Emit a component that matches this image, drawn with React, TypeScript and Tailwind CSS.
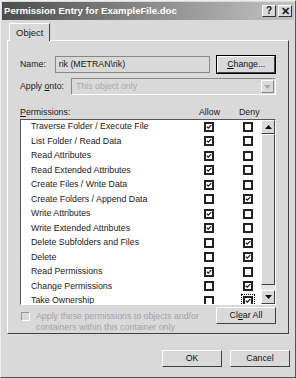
import React from 'react';

const perms: [string, boolean, boolean][] = [
  ['Traverse Folder / Execute File', true, false],
  ['List Folder / Read Data', true, false],
  ['Read Attributes', true, false],
  ['Read Extended Attributes', true, false],
  ['Create Files / Write Data', true, false],
  ['Create Folders / Append Data', false, true],
  ['Write Attributes', true, false],
  ['Write Extended Attributes', true, false],
  ['Delete Subfolders and Files', false, true],
  ['Delete', false, true],
  ['Read Permissions', true, false],
  ['Change Permissions', false, true],
  ['Take Ownership', false, true],
];

function Check({ on, focus }: { on: boolean; focus?: boolean }) {
  return (
    <div className={`flex items-center justify-center w-[12px] h-[12px] ${focus ? 'outline outline-1 outline-dotted outline-black' : ''}`}>
      <div className="w-[10px] h-[10px] border-2 border-[#222] bg-white flex items-center justify-center">
        {on && (
          <svg width="8" height="8" viewBox="0 0 8 8">
            <path d="M1 3.5 L3 5.5 L7 1.5" stroke="#111" strokeWidth="1.6" fill="none" />
          </svg>
        )}
      </div>
    </div>
  );
}

function Btn({ children, def, className = '' }: { children: React.ReactNode; def?: boolean; className?: string }) {
  return (
    <div className={`${def ? 'border border-black' : ''} ${className}`}>
      <div className="h-full border border-t-white border-l-white border-b-[#404040] border-r-[#404040] bg-[#d9d9d9] flex items-center justify-center text-[#111]">
        {children}
      </div>
    </div>
  );
}

export default function App() {
  return (
    <div
      className="w-[296px] h-[378px] bg-[#d9d9d9] text-[8.8px] leading-none text-[#1a1a1a] overflow-hidden flex flex-col border border-t-[#eee] border-l-[#eee] border-r-[#555] border-b-[#555] whitespace-nowrap"
      style={{ fontFamily: '"Liberation Sans", Arial, sans-serif' }}
    >
      {/* title bar */}
      <div className="h-[18px] mx-[1px] mt-[1px] flex items-center justify-between pl-[2px] pr-[2px] bg-gradient-to-r from-[#4d4d4d] via-[#8a8a8a] to-[#c4c4c4]">
        <span className="text-white font-bold text-[9.6px]">Permission Entry for ExampleFile.doc</span>
        <div className="flex gap-[2px]">
          <div className="w-[14px] h-[12px] bg-[#d9d9d9] border border-t-white border-l-white border-b-[#333] border-r-[#333] flex items-center justify-center text-[10px] font-bold">?</div>
          <div className="w-[14px] h-[12px] bg-[#d9d9d9] border border-t-white border-l-white border-b-[#333] border-r-[#333] flex items-center justify-center text-[11px] font-bold">✕</div>
        </div>
      </div>

      {/* tabs */}
      <div className="px-[6px] pt-[3px] flex flex-col">
        <div className="flex">
          <div className="ml-[2px] h-[18px] px-[6px] flex items-center border border-b-0 border-t-white border-l-white border-r-[#404040] bg-[#d9d9d9] relative z-10 -mb-[1px] text-[9.5px]">
            Object
          </div>
        </div>
        <div className="h-[294px] border border-t-white border-l-white border-b-[#404040] border-r-[#404040] flex flex-col px-[12px] pt-[14px]">
          {/* Name row */}
          <div className="flex items-center h-[18px]">
            <span className="w-[35px]">Name:</span>
            <div className="w-[157px] h-[17px] border border-[#888] bg-[#d9d9d9] flex items-center px-[3px]">rik (METRAN\rik)</div>
            <Btn def className="ml-[6px] w-[60px] h-[19px]"><span><span className="underline">C</span>hange...</span></Btn>
          </div>
          {/* Apply onto */}
          <div className="flex items-center h-[18px] mt-[5px]">
            <span className="w-[51px]">Apply <span className="underline">o</span>nto:</span>
            <div className="flex-1 h-[17px] border border-t-[#888] border-l-[#888] border-b-white border-r-white bg-[#d9d9d9] flex items-center justify-between pl-[4px] pr-[1px] text-[#a8a8a8]">
              <span>This object only</span>
              <div className="w-[13px] h-[13px] border border-t-white border-l-white border-b-[#888] border-r-[#888] flex items-center justify-center">
                <svg width="7" height="4" viewBox="0 0 7 4"><path d="M0 0 L7 0 L3.5 4 Z" fill="#a8a8a8" /></svg>
              </div>
            </div>
          </div>
          {/* headers */}
          <div className="flex items-center h-[14px] mt-[10px]">
            <span className="flex-1"><span className="underline">P</span>ermissions:</span>
            <span className="w-[40px]">Allow</span>
            <span className="w-[37px]">Deny</span>
          </div>
          {/* list */}
          <div className="h-[190px] border border-t-[#555] border-l-[#555] border-b-white border-r-white bg-white flex overflow-hidden">
            <div className="flex-1 flex flex-col -mt-[1px]">
              {perms.map(([name, a, d], i) => (
                <div key={name} className="flex items-center h-[14.5px] shrink-0">
                  <span className="flex-1 pl-[10px]">{name}</span>
                  <div className="w-[39px] flex pl-[3px]"><Check on={a} /></div>
                  <div className="w-[22px] flex pl-[3px]"><Check on={d} focus={i === perms.length - 1} /></div>
                </div>
              ))}
            </div>
            <div className="w-[14px] flex flex-col bg-[#e4e4e4]">
              <div className="h-[14px] bg-[#d9d9d9] border border-t-white border-l-white border-b-[#404040] border-r-[#404040] flex items-center justify-center">
                <svg width="7" height="4" viewBox="0 0 7 4"><path d="M3.5 0 L7 4 L0 4 Z" fill="#111" /></svg>
              </div>
              <div className="h-[151px] bg-[#d9d9d9] border border-t-white border-l-white border-b-[#404040] border-r-[#404040]" />
              <div className="flex-1" />
              <div className="h-[14px] bg-[#d9d9d9] border border-t-white border-l-white border-b-[#404040] border-r-[#404040] flex items-center justify-center">
                <svg width="7" height="4" viewBox="0 0 7 4"><path d="M0 0 L7 0 L3.5 4 Z" fill="#111" /></svg>
              </div>
            </div>
          </div>
          {/* bottom of panel */}
          <div className="flex mt-[2px]">
            <div className="flex flex-1 pt-[4px] pl-[1px]">
              <div className="w-[9px] h-[9px] border border-t-[#999] border-l-[#999] border-b-white border-r-white bg-[#d9d9d9] mt-[1px]" />
              <div className="ml-[6px] text-[#a3a3a3] leading-[11px]">
                <div>Apply these permissions to objects and/or</div>
                <div>containers within this container only</div>
              </div>
            </div>
            <Btn className="w-[60px] h-[17px]"><span>Cl<span className="underline">e</span>ar All</span></Btn>
          </div>
        </div>
      </div>

      {/* dialog buttons */}
      <div className="flex justify-end gap-[8px] pr-[5px] mt-[16px]">
        <Btn className="w-[60px] h-[17px]">OK</Btn>
        <Btn className="w-[60px] h-[17px]">Cancel</Btn>
      </div>
    </div>
  );
}
